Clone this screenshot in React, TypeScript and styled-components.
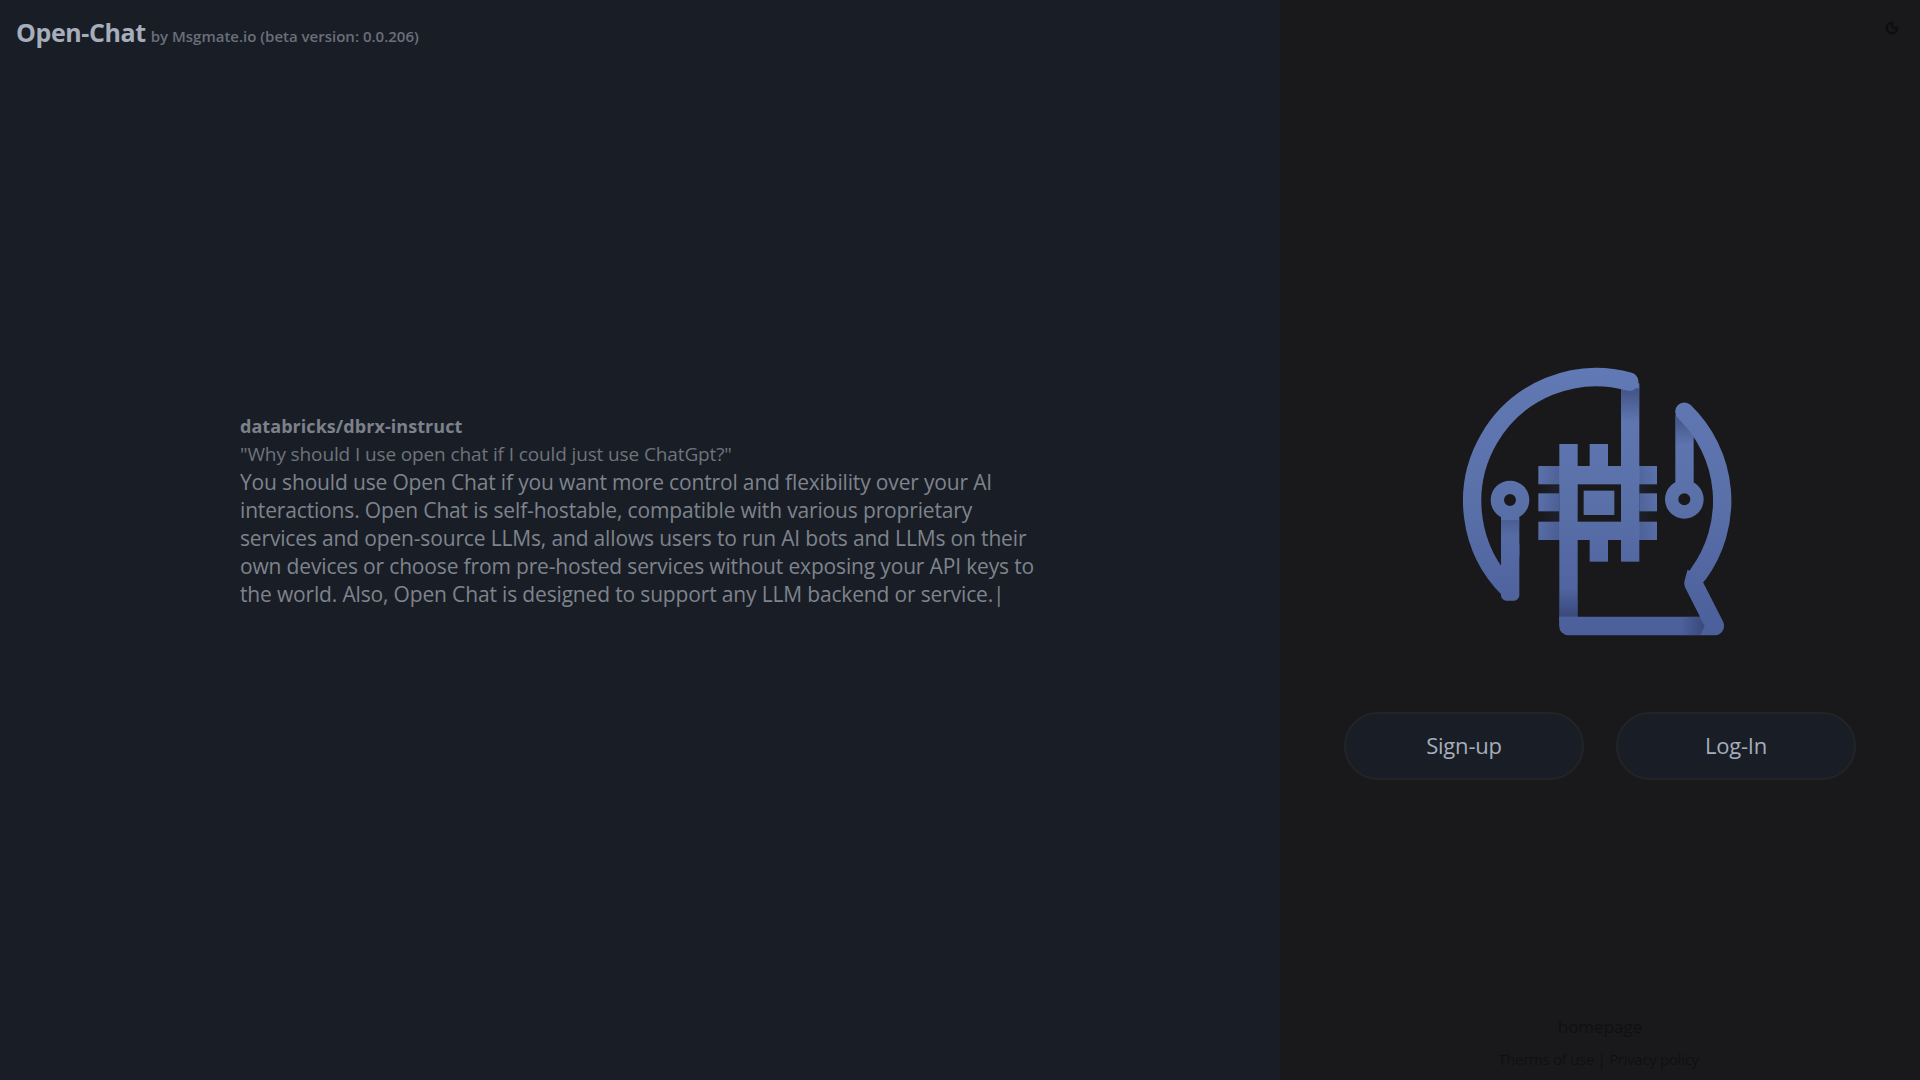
import React from "react";
import styled, { createGlobalStyle } from "styled-components";

const GlobalStyle = createGlobalStyle`
  html, body {
    margin: 0;
    padding: 0;
    height: 100%;
    background: #191e26;
  }
  #root {
    height: 100%;
  }
`;

const Page = styled.div`
  display: flex;
  width: 100%;
  height: 1080px;
  overflow: hidden;
  font-family: "Open Sans", "Noto Sans", sans-serif;
`;

const LeftPanel = styled.div`
  display: flex;
  flex-direction: column;
  width: 1280px;
  background: #191e26;
`;

const Header = styled.div`
  display: flex;
  align-items: baseline;
  gap: 5px;
  padding: 14px 16px 0;
`;

const Title = styled.div`
  color: #a6adbb;
  font-size: 25px;
  line-height: 36px;
  font-weight: 700;
  letter-spacing: -0.4px;
`;

const SubTitle = styled.div`
  color: #6a6f7b;
  font-size: 15px;
  font-weight: 600;
`;

const Demo = styled.div`
  flex: 1;
  display: flex;
  flex-direction: column;
  justify-content: center;
  padding: 0 235px 110px 240px;
  box-sizing: border-box;
`;

const Model = styled.div`
  color: #7d818b;
  font-size: 18px;
  line-height: 27px;
  font-weight: 700;
  letter-spacing: 0.05px;
`;

const Question = styled.div`
  color: #6f737d;
  font-size: 19px;
  line-height: 28px;
  letter-spacing: -0.12px;
`;

const Answer = styled.div`
  color: #7f838d;
  font-size: 21px;
  line-height: 28px;
  letter-spacing: -0.16px;
`;

const RightPanel = styled.div`
  position: relative;
  flex: 1;
  display: flex;
  flex-direction: column;
  align-items: center;
  background: #19191b;
  padding-top: 340px;
  box-sizing: border-box;
`;

const Toggle = styled.svg`
  position: absolute;
  top: 21px;
  right: 21px;
  width: 14px;
  height: 14px;
`;

const Logo = styled.svg`
  display: block;
  width: 360px;
  height: 320px;
  margin-left: 1px;
`;

const Buttons = styled.div`
  display: flex;
  gap: 32px;
  margin-top: 52px;
`;

const AuthButton = styled.button`
  width: 240px;
  height: 68px;
  border-radius: 34px;
  border: 2px solid #232427;
  background: #191e26;
  color: #a6adbb;
  font-family: inherit;
  font-size: 22px;
  letter-spacing: -0.2px;
  padding: 0 0 2px;
`;

const Footer = styled.div`
  margin-top: auto;
  padding-bottom: 9px;
  display: flex;
  flex-direction: column;
  align-items: center;
  color: #101012;
`;

const Homepage = styled.div`
  font-size: 17px;
  line-height: 24px;
  margin-bottom: 8px;
`;

const Legal = styled.div`
  font-size: 15px;
  line-height: 24px;
  letter-spacing: -0.3px;
  margin-right: 3px;
`;

const BLUE = "url(#logoBlue)";

function LogoMark() {
  return (
    <Logo viewBox="0 0 1080 960">
      <defs>
        <linearGradient id="logoBlue" gradientUnits="userSpaceOnUse" x1="0" y1="85" x2="0" y2="885">
          <stop offset="0" stopColor="#6179b4" />
          <stop offset="0.5" stopColor="#5a70a9" />
          <stop offset="1" stopColor="#4b5f9a" />
        </linearGradient>
        <linearGradient id="shadeDown" x1="0" y1="0" x2="0" y2="1">
          <stop offset="0" stopColor="#2a3560" stopOpacity="0.55" />
          <stop offset="1" stopColor="#2a3560" stopOpacity="0" />
        </linearGradient>
        <linearGradient id="shadeUp" x1="0" y1="1" x2="0" y2="0">
          <stop offset="0" stopColor="#2a3560" stopOpacity="0.55" />
          <stop offset="1" stopColor="#2a3560" stopOpacity="0" />
        </linearGradient>
        <linearGradient id="shadeRight" x1="0" y1="0" x2="1" y2="0">
          <stop offset="0" stopColor="#2a3560" stopOpacity="0" />
          <stop offset="1" stopColor="#2a3560" stopOpacity="0.55" />
        </linearGradient>
        <linearGradient id="shadeLeft" x1="1" y1="0" x2="0" y2="0">
          <stop offset="0" stopColor="#2a3560" stopOpacity="0" />
          <stop offset="1" stopColor="#2a3560" stopOpacity="0.35" />
        </linearGradient>
      </defs>

      {/* chip legs */}
      <g fill={BLUE}>
        <rect x="352" y="378" width="356" height="55" />
        <rect x="352" y="545" width="356" height="55" />
        <rect x="352" y="460" width="63" height="54" />
        <rect x="655" y="460" width="53" height="54" />
        <rect x="506" y="312" width="55" height="66" />
        <rect x="506" y="600" width="55" height="65" />
        <rect x="600" y="600" width="55" height="65" />
        <rect x="488" y="452" width="92" height="73" />
      </g>
      <rect x="352" y="378" width="63" height="222" fill="url(#shadeRight)" opacity="0.5" />
      <rect x="655" y="378" width="53" height="222" fill="url(#shadeLeft)" opacity="0.6" />

      {/* head outline and wires */}
      <g fill={BLUE}>
        <rect x="600" y="130" width="55" height="470" />
        <rect x="415" y="312" width="55" height="530" />
        <rect x="240" y="530" width="55" height="120" />
        <rect x="240" y="600" width="55" height="182" rx="16" />
        <rect x="763" y="225" width="55" height="203" />
      </g>
      <rect x="600" y="145" width="55" height="100" fill="url(#shadeDown)" />
      <rect x="763" y="225" width="55" height="90" fill="url(#shadeDown)" />
      <rect x="240" y="540" width="55" height="50" fill="url(#shadeDown)" opacity="0.5" />

      <path
        d="M 264 748 A 372 372 0 0 1 625 125"
        fill="none"
        stroke={BLUE}
        strokeWidth="55"
        strokeLinecap="round"
      />
      <path
        d="M 790 215 A 372 372 0 0 1 832 702"
        fill="none"
        stroke={BLUE}
        strokeWidth="55"
        strokeLinecap="round"
      />
      <path
        d="M 826 697 L 817 730 L 882 858 L 442 858 L 442 830"
        fill="none"
        stroke={BLUE}
        strokeWidth="55"
        strokeLinejoin="round"
      />
      <rect x="415" y="745" width="55" height="85" fill="url(#shadeUp)" />
      <path d="M 780 830 L 835 830 L 851 858 L 838 885 L 780 885 Z" fill="url(#shadeRight)" />

      <path
        fillRule="evenodd"
        fill={BLUE}
        d="M 209 480 a 58 58 0 1 0 116 0 a 58 58 0 1 0 -116 0 Z M 249 480 a 18 18 0 1 0 36 0 a 18 18 0 1 0 -36 0 Z"
      />
      <path
        fillRule="evenodd"
        fill={BLUE}
        d="M 732 478 a 58 58 0 1 0 116 0 a 58 58 0 1 0 -116 0 Z M 772 478 a 18 18 0 1 0 36 0 a 18 18 0 1 0 -36 0 Z"
      />
    </Logo>
  );
}

export default function App() {
  return (
    <Page>
      <GlobalStyle />
      <LeftPanel>
        <Header>
          <Title>Open-Chat</Title>
          <SubTitle>by Msgmate.io (beta version: 0.0.206)</SubTitle>
        </Header>
        <Demo>
          <Model>databricks/dbrx-instruct</Model>
          <Question>"Why should I use open chat if I could just use ChatGpt?"</Question>
          <Answer>
            You should use Open Chat if you want more control and flexibility over your AI
            interactions. Open Chat is self-hostable, compatible with various proprietary
            services and open-source LLMs, and allows users to run AI bots and LLMs on their
            own devices or choose from pre-hosted services without exposing your API keys to
            the world. Also, Open Chat is designed to support any LLM backend or service.|
          </Answer>
        </Demo>
      </LeftPanel>
      <RightPanel>
        <Toggle viewBox="0 0 24 24" fill="none" stroke="#0e0e10" strokeWidth="4" strokeLinecap="round">
          <path d="M12 3a9 9 0 1 0 9 9 7 7 0 0 1-9-9Z" />
        </Toggle>
        <LogoMark />
        <Buttons>
          <AuthButton>Sign-up</AuthButton>
          <AuthButton>Log-In</AuthButton>
        </Buttons>
        <Footer>
          <Homepage>homepage</Homepage>
          <Legal>Therms of use | Privacy policy</Legal>
        </Footer>
      </RightPanel>
    </Page>
  );
}
